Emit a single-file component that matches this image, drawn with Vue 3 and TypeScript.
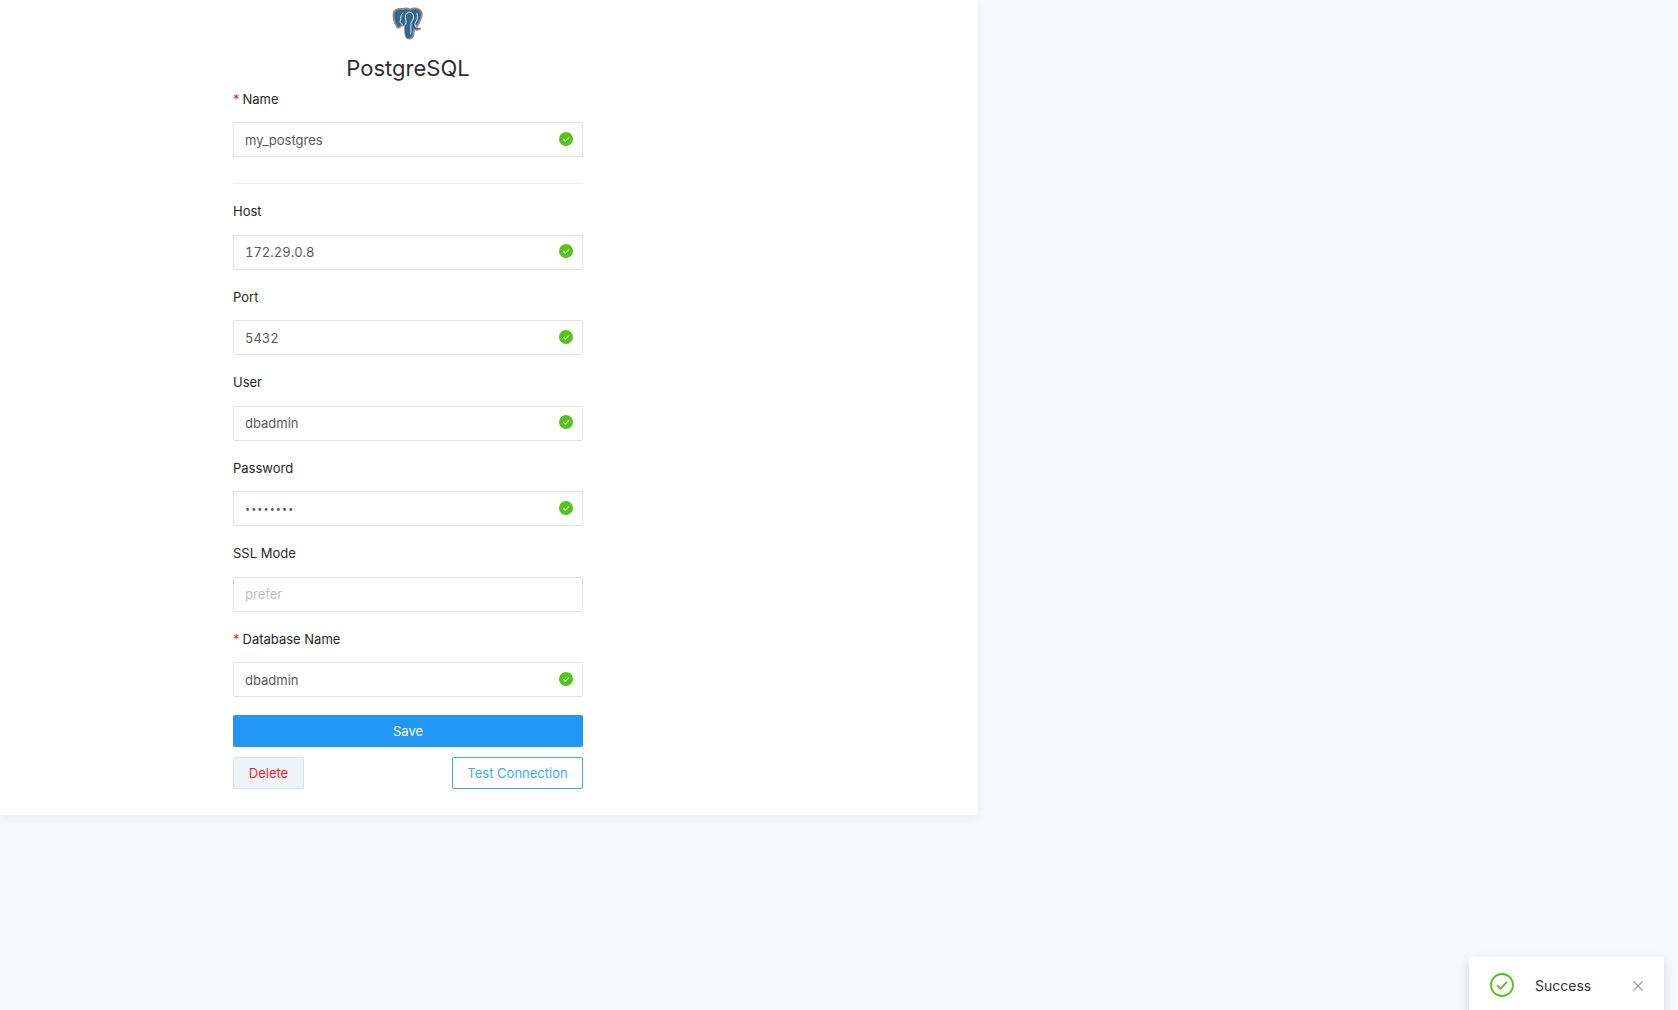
<script setup lang="ts">
interface Field {
  label: string
  value: string
  required?: boolean
  type?: string
  placeholder?: string
  valid: boolean
}

const nameField: Field = { label: 'Name', value: 'my_postgres', required: true, valid: true }

const fields: Field[] = [
  { label: 'Host', value: '172.29.0.8', valid: true },
  { label: 'Port', value: '5432', valid: true },
  { label: 'User', value: 'dbadmin', valid: true },
  { label: 'Password', value: 'password', type: 'password', valid: true },
  { label: 'SSL Mode', value: '', placeholder: 'prefer', valid: false },
  { label: 'Database Name', value: 'dbadmin', required: true, valid: true },
]
</script>

<template>
  <div class="page">
    <div class="card">
      <div class="form">
        <div class="logo">
          <svg width="32" height="33" viewBox="0 0 32 33">
            <path d="M8 1C3.500 1 .500 3.500.500 8c0 4 1.800 9.300 3.800 12.300 1.300 1.900 3 1.700 4.200.4l1.600-1.800c.8.600 1.500.8 2.300.7-.2 1.600-.2 3-.1 5 .2 3.500 1 8 4.800 8 3.500 0 5-2.200 5.400-5.900l.4-3.400c2.800.8 5.200.1 6-1.300.4-.8-.3-1.300-1.500-1.100-1.200.2-2 0-2.200-.5 2.800-3.900 6-10.300 5.500-14.200C30 2.500 26.200.4 22.600.5c-1.800 0-3.200.4-4.400 1C16.900.900 15.600.5 14 .5c-1.400 0-2.500.2-3.200.6C10 1 9 1 8 1z" fill="#8d8d8d" />
            <path d="M8 2.700C4.500 2.700 2.300 4.700 2.300 8c0 3.800 1.500 8.500 3.300 11.200.9 1.300 1.700 1 2.500.1l1.700-2c1 .9 2 1.400 3.500 1.200-.5 2-.5 3.800-.3 6 .3 3.300 1 6.700 3.600 6.700 2.500 0 3.700-1.600 4-4.600l.6-5c2.700 1.100 5 .8 6-.4-2.200.3-3.600-.2-4-1.200 3-4 6-10.400 5.600-13.900C28.400 3.700 25.500 2.100 22.700 2.200c-1.600 0-3 .5-4.400 1.200C17 2.700 15.600 2.200 14 2.200c-1.500 0-2.600.3-3.200.8C10 2.800 9 2.700 8 2.700z" fill="#336791" />
            <path d="M10.800 6c-1.500 1.500-2.200 3-2.100 5.500.1 1.500-.5 2.400-.7 3.300.3 1.200 1.200 2.100 2.200 2.500M13.500 8.500c-.4 2.500.6 4.600.4 7-.1 1.200-.6 2-1.200 2.600M13.500 8.500C14 6.500 16 5 18 5.200c2.500.2 3.800 3 3.500 5.800-.2 1.800-1.300 2.600-2 4-.7 1.500-.6 3.500-.6 6 0 2.300.4 4.300-.4 6M25 6.500c.7 2.500.6 4.300 0 6-.7 2.100-2.100 3.400-2.100 5.100 0 1 .7 1.700 1.200 2.200" fill="none" stroke="#e8eef3" stroke-width="1" stroke-linecap="round" />
          </svg>
        </div>
        <h1 class="title">PostgreSQL</h1>

        <div class="item item-first">
          <label class="label"><span class="req">*</span>{{ nameField.label }}</label>
          <div class="control">
            <input class="input" readonly :value="nameField.value" />
            <svg class="check" viewBox="0 0 14 14">
              <circle cx="7" cy="7" r="7" fill="#52c41a" />
              <path d="M4.300 7.200l2 2 3.500-3.900" fill="none" stroke="#fff" stroke-width="1.100" />
            </svg>
          </div>
        </div>

        <div class="divider"></div>

        <div v-for="field in fields" :key="field.label" class="item">
          <label class="label"><span v-if="field.required" class="req">*</span>{{ field.label }}</label>
          <div class="control">
            <input class="input" :class="{ 'input-secret': field.type === 'password' }" readonly :type="field.type || 'text'" :value="field.value" :placeholder="field.placeholder" />
            <svg v-if="field.valid" class="check" viewBox="0 0 14 14">
              <circle cx="7" cy="7" r="7" fill="#52c41a" />
              <path d="M4.300 7.200l2 2 3.500-3.900" fill="none" stroke="#fff" stroke-width="1.100" />
            </svg>
          </div>
        </div>

        <button class="btn btn-save">Save</button>
        <div class="actions">
          <button class="btn btn-delete">Delete</button>
          <button class="btn btn-test">Test Connection</button>
        </div>
      </div>
    </div>

    <div class="toast">
      <svg class="toast-icon" viewBox="0 0 24 24">
        <circle cx="12" cy="12" r="11" fill="none" stroke="#52c41a" stroke-width="1.800" />
        <path d="M7 12.300l3.500 3.500 6.500-7" fill="none" stroke="#52c41a" stroke-width="1.800" />
      </svg>
      <span class="toast-text">Success</span>
      <svg class="toast-close" viewBox="0 0 12 12">
        <path d="M1.500 1.500l9 9M10.500 1.500l-9 9" fill="none" stroke="#999" stroke-width="1.100" />
      </svg>
    </div>
  </div>
</template>

<style>
html,
body {
  margin: 0;
  background: #f7f8fa;
}
</style>

<style scoped>
.page {
  position: relative;
  height: 1010px;
  overflow: hidden;
  background: #f7f8fa;
  font-family: Inter, "Liberation Sans", sans-serif;
  color: #333;
}

.card {
  width: 978px;
  height: 815px;
  box-sizing: border-box;
  padding-left: 233px;
  background: #fff;
  box-shadow: 0 2px 8px rgba(0, 0, 0, 0.06);
}

.form {
  width: 350px;
}

.logo {
  display: flex;
  justify-content: center;
  padding-top: 7px;
  height: 33px;
}

.title {
  margin: 12px 0 0;
  text-align: center;
  font-size: 22px;
  line-height: 32px;
  font-weight: 400;
  color: #2f2f2f;
}

.item {
  margin-bottom: 17px;
}

.item-first {
  margin-top: 5px;
  margin-bottom: 26px;
}

.item-first .label {
  margin-bottom: 12px;
}

.label {
  display: block;
  height: 21px;
  line-height: 21px;
  margin-bottom: 12.500px;
  font-size: 13px;
  color: #262626;
}

.req {
  color: #f5222d;
  margin-right: 3px;
  font-size: 13px;
}

.control {
  position: relative;
}

.input {
  display: block;
  width: 100%;
  height: 35px;
  box-sizing: border-box;
  padding: 0 11px;
  border: 1px solid #e3e3e3;
  border-radius: 2px;
  outline: none;
  background: #fff;
  font-family: inherit;
  font-size: 13px;
  font-variant-numeric: tabular-nums;
  color: #595959;
}

.input-secret {
  font-size: 9px;
  letter-spacing: 1.100px;
}

.input::placeholder {
  color: #bfbfbf;
}

.check {
  position: absolute;
  right: 10.500px;
  top: 9.500px;
  width: 14px;
  height: 14px;
}

.divider {
  height: 1px;
  background: #ececec;
  margin-bottom: 17px;
}

.btn {
  display: block;
  box-sizing: border-box;
  height: 32px;
  border-radius: 2px;
  font-family: inherit;
  font-size: 13px;
  cursor: pointer;
}

.btn-save {
  width: 100%;
  border: none;
  background: #2196f3;
  color: #fff;
  margin-top: 18px;
}

.actions {
  display: flex;
  justify-content: space-between;
  margin-top: 10px;
}

.btn-delete {
  width: 71px;
  border: 1px solid #dde3e6;
  background: #f0f3f5;
  color: #f5222d;
}

.btn-test {
  width: 131px;
  border: 1px solid #40a9ff;
  background: #fff;
  color: #40a9ff;
}

.toast {
  position: absolute;
  left: 1469px;
  top: 957px;
  width: 195px;
  height: 70px;
  box-sizing: border-box;
  padding: 16px 20px 0 21px;
  display: flex;
  align-items: flex-start;
  background: #fff;
  border-radius: 2px;
  box-shadow: 0 4px 12px rgba(0, 0, 0, 0.15);
}

.toast-icon {
  width: 24px;
  height: 24px;
  flex: none;
}

.toast-text {
  margin-left: 21px;
  font-size: 14px;
  line-height: 26px;
  color: #333;
  flex: 1;
}

.toast-close {
  width: 12px;
  height: 12px;
  margin-top: 7px;
  flex: none;
}
</style>
